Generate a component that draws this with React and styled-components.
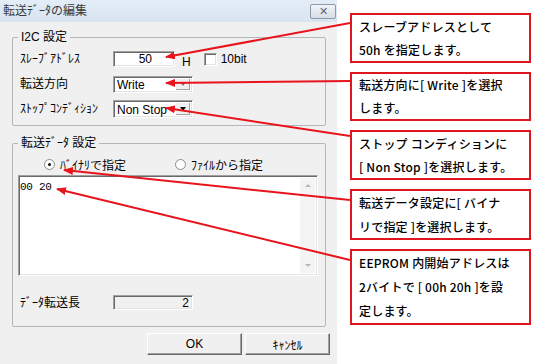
import React from "react";
import styled, { createGlobalStyle } from "styled-components";

const Global = createGlobalStyle`
  html, body { margin: 0; padding: 0; background: #fff; }
  body { font-family: "Liberation Sans", "Noto Sans CJK JP", sans-serif; }
`;

const UI = `"Liberation Sans", "Noto Sans CJK JP", sans-serif`;

const Page = styled.div`
  position: relative;
  width: 544px;
  height: 364px;
  display: flex;
  overflow: hidden;
  background: #fff;
`;

const Dialog = styled.div`
  width: 337px;
  height: 364px;
  background: #f0f0f0;
  display: flex;
  flex-direction: column;
  font-family: ${UI};
  font-size: 12px;
  color: #000;
`;

const TitleBar = styled.div`
  height: 22px;
  flex: none;
  display: flex;
  align-items: center;
  justify-content: space-between;
  padding: 0 1px 0 3px;
  background: linear-gradient(#e4edf7, #d9e4f0);
  box-sizing: border-box;
`;

const Title = styled.span`
  font-size: 12px;
  color: #3a3a3a;
  line-height: 1;
`;

const CloseButton = styled.div`
  width: 26px;
  height: 15px;
  box-sizing: border-box;
  border: 1px solid #8f9aa8;
  border-radius: 2px;
  background: linear-gradient(#f1f4f8, #d6dde6);
  display: flex;
  align-items: center;
  justify-content: center;
  font-size: 11px;
  color: #5a6676;
  line-height: 1;
`;

const Body = styled.div`
  padding: 0 11px 0 12px;
  display: flex;
  flex-direction: column;
`;

const Group = styled.div`
  position: relative;
  box-sizing: border-box;
  border: 1px solid #b2b7bc;
  border-radius: 2px;
  margin-top: ${(p) => p.$mt}px;
  height: ${(p) => p.$h}px;
`;

const Legend = styled.span`
  position: absolute;
  top: -8px;
  left: 5px;
  padding: 0 3px;
  background: #f0f0f0;
  line-height: 14px;
  font-size: 12px;
`;

const FormGrid = styled.div`
  display: grid;
  grid-template-columns: 93px auto;
  grid-auto-rows: 18px;
  row-gap: 7px;
  align-items: center;
  padding: 12px 0 0 7px;
`;

const Label = styled.span`
  font-size: 12px;
  line-height: 14px;
  white-space: nowrap;
`;

const Inline = styled.div`
  display: flex;
  align-items: center;
  height: 18px;
`;

const sunken = `
  box-sizing: border-box;
  border: 1px solid;
  border-color: #a0a0a0 #fff #fff #a0a0a0;
  box-shadow: inset 1px 1px 0 #696969, inset -1px -1px 0 #e3e3e3;
`;

const TextField = styled.div`
  ${sunken}
  width: ${(p) => p.$w}px;
  height: ${(p) => p.$h}px;
  background: ${(p) => (p.$disabled ? "#f0f0f0" : "#fff")};
  display: flex;
  align-items: center;
  justify-content: flex-end;
  padding-right: ${(p) => p.$pr}px;
  font-size: 12px;
  line-height: 1;
`;

const Unit = styled.span`
  margin: 6px 0 0 7px;
  font-size: 12px;
  line-height: 12px;
`;

const CheckBox = styled.div`
  ${sunken}
  width: 13px;
  height: 13px;
  background: #fff;
  margin-left: 13px;
`;

const CheckLabel = styled.span`
  margin-left: 4px;
  font-size: 12px;
`;

const Combo = styled.div`
  ${sunken}
  width: 80px;
  height: ${(p) => p.$h}px;
  background: #fff;
  display: flex;
  align-items: stretch;
  padding: 2px;
`;

const ComboText = styled.span`
  flex: 1;
  padding-left: 1px;
  font-size: 12px;
  line-height: ${(p) => p.$h - 4}px;
`;

const ComboButton = styled.div`
  width: 14px;
  background: #f0f0f0;
  display: flex;
  align-items: center;
  justify-content: center;
  border-left: 1px solid #fff;
  box-shadow: inset -1px -1px 0 #a0a0a0;
`;

const Tri = styled.span`
  width: 0;
  height: 0;
  border-left: 3.5px solid transparent;
  border-right: 3.5px solid transparent;
  border-top: 4px solid ${(p) => p.$c};
`;

const RadioRow = styled.div`
  display: flex;
  align-items: center;
  height: 14px;
  margin: 13px 0 0 31px;
`;

const RadioItem = styled.label`
  display: flex;
  align-items: center;
  width: ${(p) => p.$w}px;
  font-size: 12px;
`;

const RadioCircle = styled.span`
  width: 11px;
  height: 11px;
  border-radius: 50%;
  box-sizing: border-box;
  border: 1px solid #8c8c8c;
  background: #fff;
  display: flex;
  align-items: center;
  justify-content: center;
  margin-right: 5px;
  &::after {
    content: "";
    width: 3px;
    height: 3px;
    border-radius: 50%;
    background: ${(p) => (p.$on ? "#111" : "transparent")};
  }
`;

const DataArea = styled.div`
  ${sunken}
  width: 300px;
  height: 101px;
  margin: 4px 0 0 5px;
  background: #fff;
  display: flex;
`;

const DataText = styled.div`
  flex: 1;
  font-family: "Liberation Mono", monospace;
  font-size: 11px;
  line-height: 14px;
  padding: 4px 0 0 1px;
  letter-spacing: -0.3px;
`;

const ScrollBar = styled.div`
  width: 15px;
  margin: 2px 2px 2px 0;
  background: #f4f4f4;
  display: flex;
  flex-direction: column;
  justify-content: space-between;
  align-items: center;
  padding: 6px 0;
  box-sizing: border-box;
`;

const ScrollArrow = styled.span`
  width: 0;
  height: 0;
  border-left: 3px solid transparent;
  border-right: 3px solid transparent;
  ${(p) =>
    p.$up ? "border-bottom: 3px solid #b8b8b8;" : "border-top: 3px solid #b8b8b8;"}
`;

const LengthRow = styled.div`
  display: grid;
  grid-template-columns: 93px auto;
  align-items: center;
  padding-left: 7px;
  margin-top: 19px;
`;

const ButtonRow = styled.div`
  display: flex;
  justify-content: flex-end;
  gap: 3px;
  padding-right: 7px;
  margin-top: 6px;
`;

const Button = styled.div`
  width: ${(p) => p.$w}px;
  height: 22px;
  box-sizing: border-box;
  border: 1px solid;
  border-color: #fff #696969 #696969 #fff;
  box-shadow: inset -1px -1px 0 #a0a0a0;
  background: #f0f0f0;
  display: flex;
  align-items: center;
  justify-content: center;
  font-size: 12px;
`;

const Notes = styled.div`
  flex: 1;
  display: flex;
  flex-direction: column;
  gap: 9px;
  padding: 13px 0 0 13px;
`;

const Callout = styled.div`
  width: 181px;
  box-sizing: border-box;
  border: 2px solid #e0161f;
  padding: 0 0 0 7px;
  font-family: "Noto Sans CJK JP", sans-serif;
  font-size: 12px;
  font-weight: 500;
  letter-spacing: 0.2px;
  line-height: ${(p) => p.$lh}px;
  white-space: nowrap;
  color: #000;
`;

const Overlay = styled.svg`
  position: absolute;
  left: 0;
  top: 0;
  pointer-events: none;
`;

const arrows = [
  [350, 23, 166, 57],
  [350, 81, 166, 83],
  [350, 136, 166, 108],
  [350, 200, 64, 170],
  [350, 260, 57, 189],
];

export default function App() {
  return (
    <>
      <Global />
      <Page>
        <Dialog>
          <TitleBar>
            <Title>転送ﾃﾞｰﾀの編集</Title>
            <CloseButton>✕</CloseButton>
          </TitleBar>
          <Body>
            <Group $mt={15} $h={89}>
              <Legend>I2C 設定</Legend>
              <FormGrid>
                <Label>ｽﾚｰﾌﾞｱﾄﾞﾚｽ</Label>
                <Inline>
                  <TextField $w={62} $h={16} $pr={22}>50</TextField>
                  <Unit>H</Unit>
                  <CheckBox />
                  <CheckLabel>10bit</CheckLabel>
                </Inline>
                <Label>転送方向</Label>
                <Combo $h={17}>
                  <ComboText $h={17}>Write</ComboText>
                  <ComboButton>
                    <Tri $c="#777" />
                  </ComboButton>
                </Combo>
                <Label>ｽﾄｯﾌﾟｺﾝﾃﾞｨｼｮﾝ</Label>
                <Combo $h={18}>
                  <ComboText $h={18}>Non Stop</ComboText>
                  <ComboButton>
                    <Tri $c="#000" />
                  </ComboButton>
                </Combo>
              </FormGrid>
            </Group>
            <Group $mt={17} $h={184}>
              <Legend>転送ﾃﾞｰﾀ 設定</Legend>
              <RadioRow>
                <RadioItem $w={131}>
                  <RadioCircle $on />
                  ﾊﾞｲﾅﾘで指定
                </RadioItem>
                <RadioItem $w={100}>
                  <RadioCircle />
                  ﾌｧｲﾙから指定
                </RadioItem>
              </RadioRow>
              <DataArea>
                <DataText>00 20</DataText>
                <ScrollBar>
                  <ScrollArrow $up />
                  <ScrollArrow />
                </ScrollBar>
              </DataArea>
              <LengthRow>
                <Label>ﾃﾞｰﾀ転送長</Label>
                <TextField $w={80} $h={15} $pr={3} $disabled>2</TextField>
              </LengthRow>
            </Group>
          </Body>
          <ButtonRow>
            <Button $w={95}>OK</Button>
            <Button $w={85}>ｷｬﾝｾﾙ</Button>
          </ButtonRow>
        </Dialog>
        <Notes>
          <Callout $lh={23}>スレーブアドレスとして<br />50h を指定します。</Callout>
          <Callout $lh={22.5}>転送方向に[ Write ]を選択<br />します。</Callout>
          <Callout $lh={23}>ストップ コンディションに<br />[ Non Stop ]を選択します。</Callout>
          <Callout $lh={23.5}>転送データ設定に[ バイナ<br />リで指定 ]を選択します。</Callout>
          <Callout $lh={24}>EEPROM 内開始アドレスは<br />2バイトで [ 00h 20h ]を設<br />定します。</Callout>
        </Notes>
        <Overlay width="544" height="364" viewBox="0 0 544 364">
          <defs>
            <marker id="ah" viewBox="0 0 10 8" refX="9" refY="4" markerWidth="10" markerHeight="8" markerUnits="userSpaceOnUse" orient="auto">
              <path d="M0 0 L10 4 L0 8 Z" fill="#e8141c" />
            </marker>
          </defs>
          {arrows.map(([x1, y1, x2, y2], i) => (
            <line key={i} x1={x1} y1={y1} x2={x2} y2={y2} stroke="#e8141c" strokeWidth="2" markerEnd="url(#ah)" />
          ))}
        </Overlay>
      </Page>
    </>
  );
}
